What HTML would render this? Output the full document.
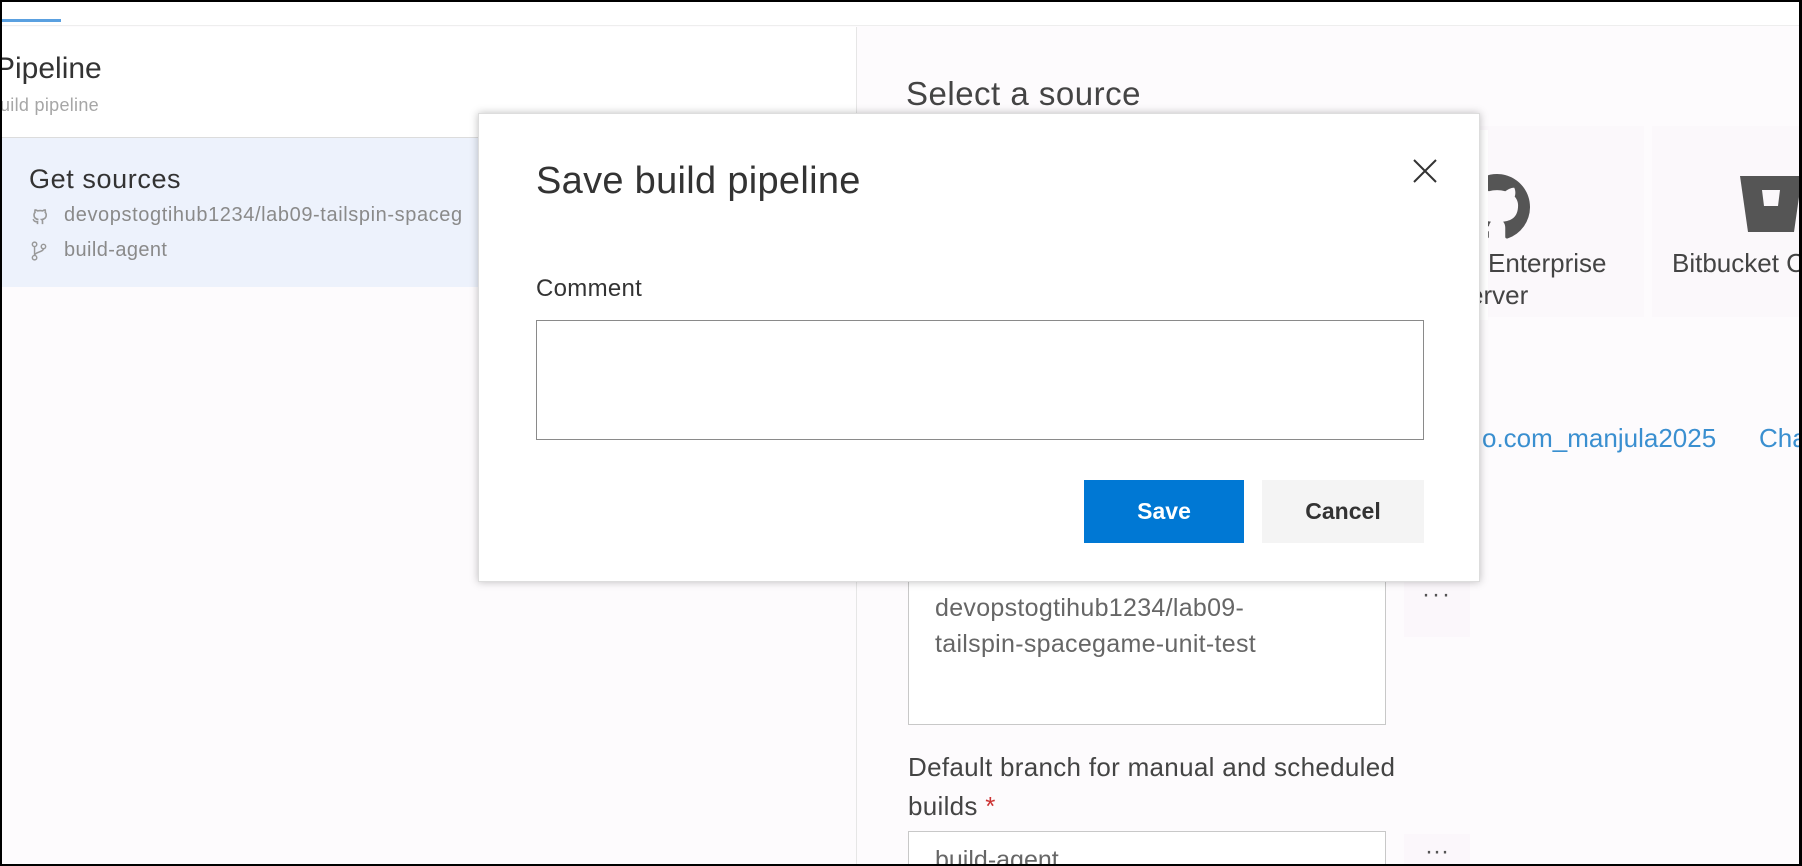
<!DOCTYPE html>
<html><head><meta charset="utf-8"><style>
*{margin:0;padding:0;box-sizing:border-box}
body{width:1802px;height:866px;overflow:hidden;background:#000;font-family:"Liberation Sans",sans-serif;position:relative}
#pg{position:absolute;left:2px;top:2px;width:1797px;height:862px;background:#fdfbfd;overflow:hidden}
.a{position:absolute;white-space:nowrap}
</style></head><body>
<div id="pg">
  <div class="a" style="left:0;top:0;width:1797px;height:24px;background:#fff;border-bottom:1px solid #eee"></div>
  <div class="a" style="left:0;top:17px;width:59px;height:3px;background:#5aa0e0"></div>
  <div class="a" style="left:0;top:25px;width:854px;height:110px;background:#fff"></div>
  <div class="a" style="left:854px;top:25px;width:1px;height:840px;background:#e6e6e6"></div>
  <div class="a" style="left:-7px;top:50px;font-size:30px;color:#333">Pipeline</div>
  <div class="a" style="left:-2px;top:93px;font-size:18px;color:#a6a6a6;letter-spacing:0.3px">uild pipeline</div>
  <div class="a" style="left:0;top:135px;width:854px;height:150px;background:#edf2fc;border-top:1px solid #dcdcdc"></div>
  <div class="a" style="left:27px;top:162px;font-size:27px;color:#333;letter-spacing:0.6px">Get sources</div>
  <svg class="a" style="left:28px;top:204px" width="20" height="20" viewBox="0 0 16 16"><path fill="none" stroke="#999" stroke-width="1.3" d="M6 14.5v-2c-2.5.5-3-1-3.5-2M10 14.5v-2.2c0-.7-.2-1.2-.6-1.5 2-.2 3.6-1 3.6-3.7 0-.8-.3-1.5-.8-2 .1-.4.2-1.2-.1-2-.8 0-1.5.4-2 .8a7 7 0 0 0-4 0c-.5-.4-1.2-.8-2-.8-.3.8-.2 1.6-.1 2-.5.5-.8 1.2-.8 2 0 2.7 1.6 3.5 3.6 3.7"/></svg>
  <div class="a" style="left:62px;top:202px;font-size:20px;color:#8a8a8a;letter-spacing:0.6px">devopstogtihub1234/lab09-tailspin-spaceg</div>
  <svg class="a" style="left:28px;top:239px" width="18" height="20" viewBox="0 0 16 18"><g fill="none" stroke="#999" stroke-width="1.3"><circle cx="4" cy="3" r="2"/><circle cx="4" cy="15" r="2"/><circle cx="12" cy="5" r="2"/><path d="M4 5v8M12 7c0 3-8 3-8 6"/></g></svg>
  <div class="a" style="left:62px;top:237px;font-size:20px;color:#8a8a8a;letter-spacing:0.4px">build-agent</div>

  <div class="a" style="left:904px;top:73px;font-size:33px;color:#444;letter-spacing:0.5px">Select a source</div>
  <div class="a" style="left:1410px;top:124px;width:232px;height:191px;background:#fbf8fb"></div>
  <div class="a" style="left:1650px;top:124px;width:160px;height:191px;background:#fbf8fb"></div>
  <svg class="a" style="left:1462px;top:172px" width="66" height="66" viewBox="0 0 16 16"><path fill="#555" d="M8 0C3.58 0 0 3.58 0 8c0 3.54 2.29 6.530 5.470 7.59.4.07.55-.17.55-.38v-1.33c-2.23.48-2.7-1.07-2.7-1.07-.36-.92-.89-1.170-.89-1.17-.73-.5.05-.49.05-.49.8.06 1.23.83 1.23.83.72 1.23 1.88.87 2.34.66.07-.52.28-.87.51-1.07-1.780-.2-3.65-.89-3.65-3.95 0-.87.31-1.59.82-2.15-.08-.2-.36-1.02.08-2.12 0 0 .67-.21 2.2.82a7.6 7.6 0 0 1 4 0c1.53-1.04 2.2-.82 2.2-.82.44 1.1.16 1.92.08 2.12.51.56.82 1.27.82 2.15 0 3.07-1.87 3.75-3.650 3.95.29.25.54.73.54 1.48v2.2c0 .21.15.46.55.38A8 8 0 0 0 16 8c0-4.42-3.58-8-8-8z"/></svg>
  <div class="a" style="left:1410px;top:128px;width:76px;height:190px;background:#fff"></div>
  <div class="a" style="left:1486px;top:246px;font-size:26px;color:#444">Enterprise</div>
  <div class="a" style="left:1467px;top:278px;font-size:26px;color:#444">erver</div>
  <svg class="a" style="left:1738px;top:174px" width="62" height="56" viewBox="0 0 62 56"><path fill="#555" d="M0 0h62l-8 56H8z"/><path fill="#fbf8fb" d="M22 14h18l-2 16H24z"/></svg>
  <div class="a" style="left:1670px;top:246px;font-size:26px;color:#444">Bitbucket C</div>
  <div class="a" style="left:1480px;top:421px;font-size:26px;color:#3a8fd0">o.com_manjula2025</div>
  <div class="a" style="left:1757px;top:421px;font-size:26px;color:#3a8fd0">Cha</div>
  <div class="a" style="left:906px;top:560px;width:478px;height:163px;background:#fff;border:1px solid #c8c8c8"></div>
  <div class="a" style="left:933px;top:588px;font-size:25px;color:#666;line-height:36px;letter-spacing:0.3px">devopstogtihub1234/lab09-<br>tailspin-spacegame-unit-test</div>
  <div class="a" style="left:1402px;top:575px;width:66px;height:60px;background:#fbf7fb;font-size:24px;color:#555;text-align:center;line-height:36px;letter-spacing:2px">···</div>
  <div class="a" style="left:906px;top:746px;font-size:26px;color:#444;line-height:39px;letter-spacing:0.3px">Default branch for manual and scheduled<br>builds <span style="color:#c33">*</span></div>
  <div class="a" style="left:906px;top:829px;width:478px;height:60px;background:#fff;border:1px solid #c8c8c8"></div>
  <div class="a" style="left:933px;top:844px;font-size:25px;color:#666">build-agent</div>
  <div class="a" style="left:1402px;top:832px;width:66px;height:60px;background:#fbf7fb;font-size:24px;color:#555;text-align:center;line-height:36px">···</div>

  <div class="a" style="left:476px;top:111px;width:1002px;height:469px;background:#fff;box-shadow:0 0 8px rgba(0,0,0,.25);border:1px solid #ddd">
    <div class="a" style="left:57px;top:46px;font-size:38px;color:#333;letter-spacing:0.3px">Save build pipeline</div>
    <svg class="a" style="left:933px;top:44px" width="26" height="26" viewBox="0 0 26 26"><path d="M2 2L24 24M24 2L2 24" stroke="#333" stroke-width="2"/></svg>
    <div class="a" style="left:57px;top:161px;font-size:24px;color:#333;letter-spacing:0.3px">Comment</div>
    <div class="a" style="left:57px;top:206px;width:888px;height:120px;border:1px solid #8a8a8a"></div>
    <div class="a" style="left:605px;top:366px;width:160px;height:63px;background:#0078d4;color:#fff;font-weight:bold;font-size:23px;text-align:center;line-height:63px">Save</div>
    <div class="a" style="left:783px;top:366px;width:162px;height:63px;background:#f4f4f4;color:#333;font-weight:bold;font-size:23px;text-align:center;line-height:63px">Cancel</div>
  </div>
</div>
</body></html>
